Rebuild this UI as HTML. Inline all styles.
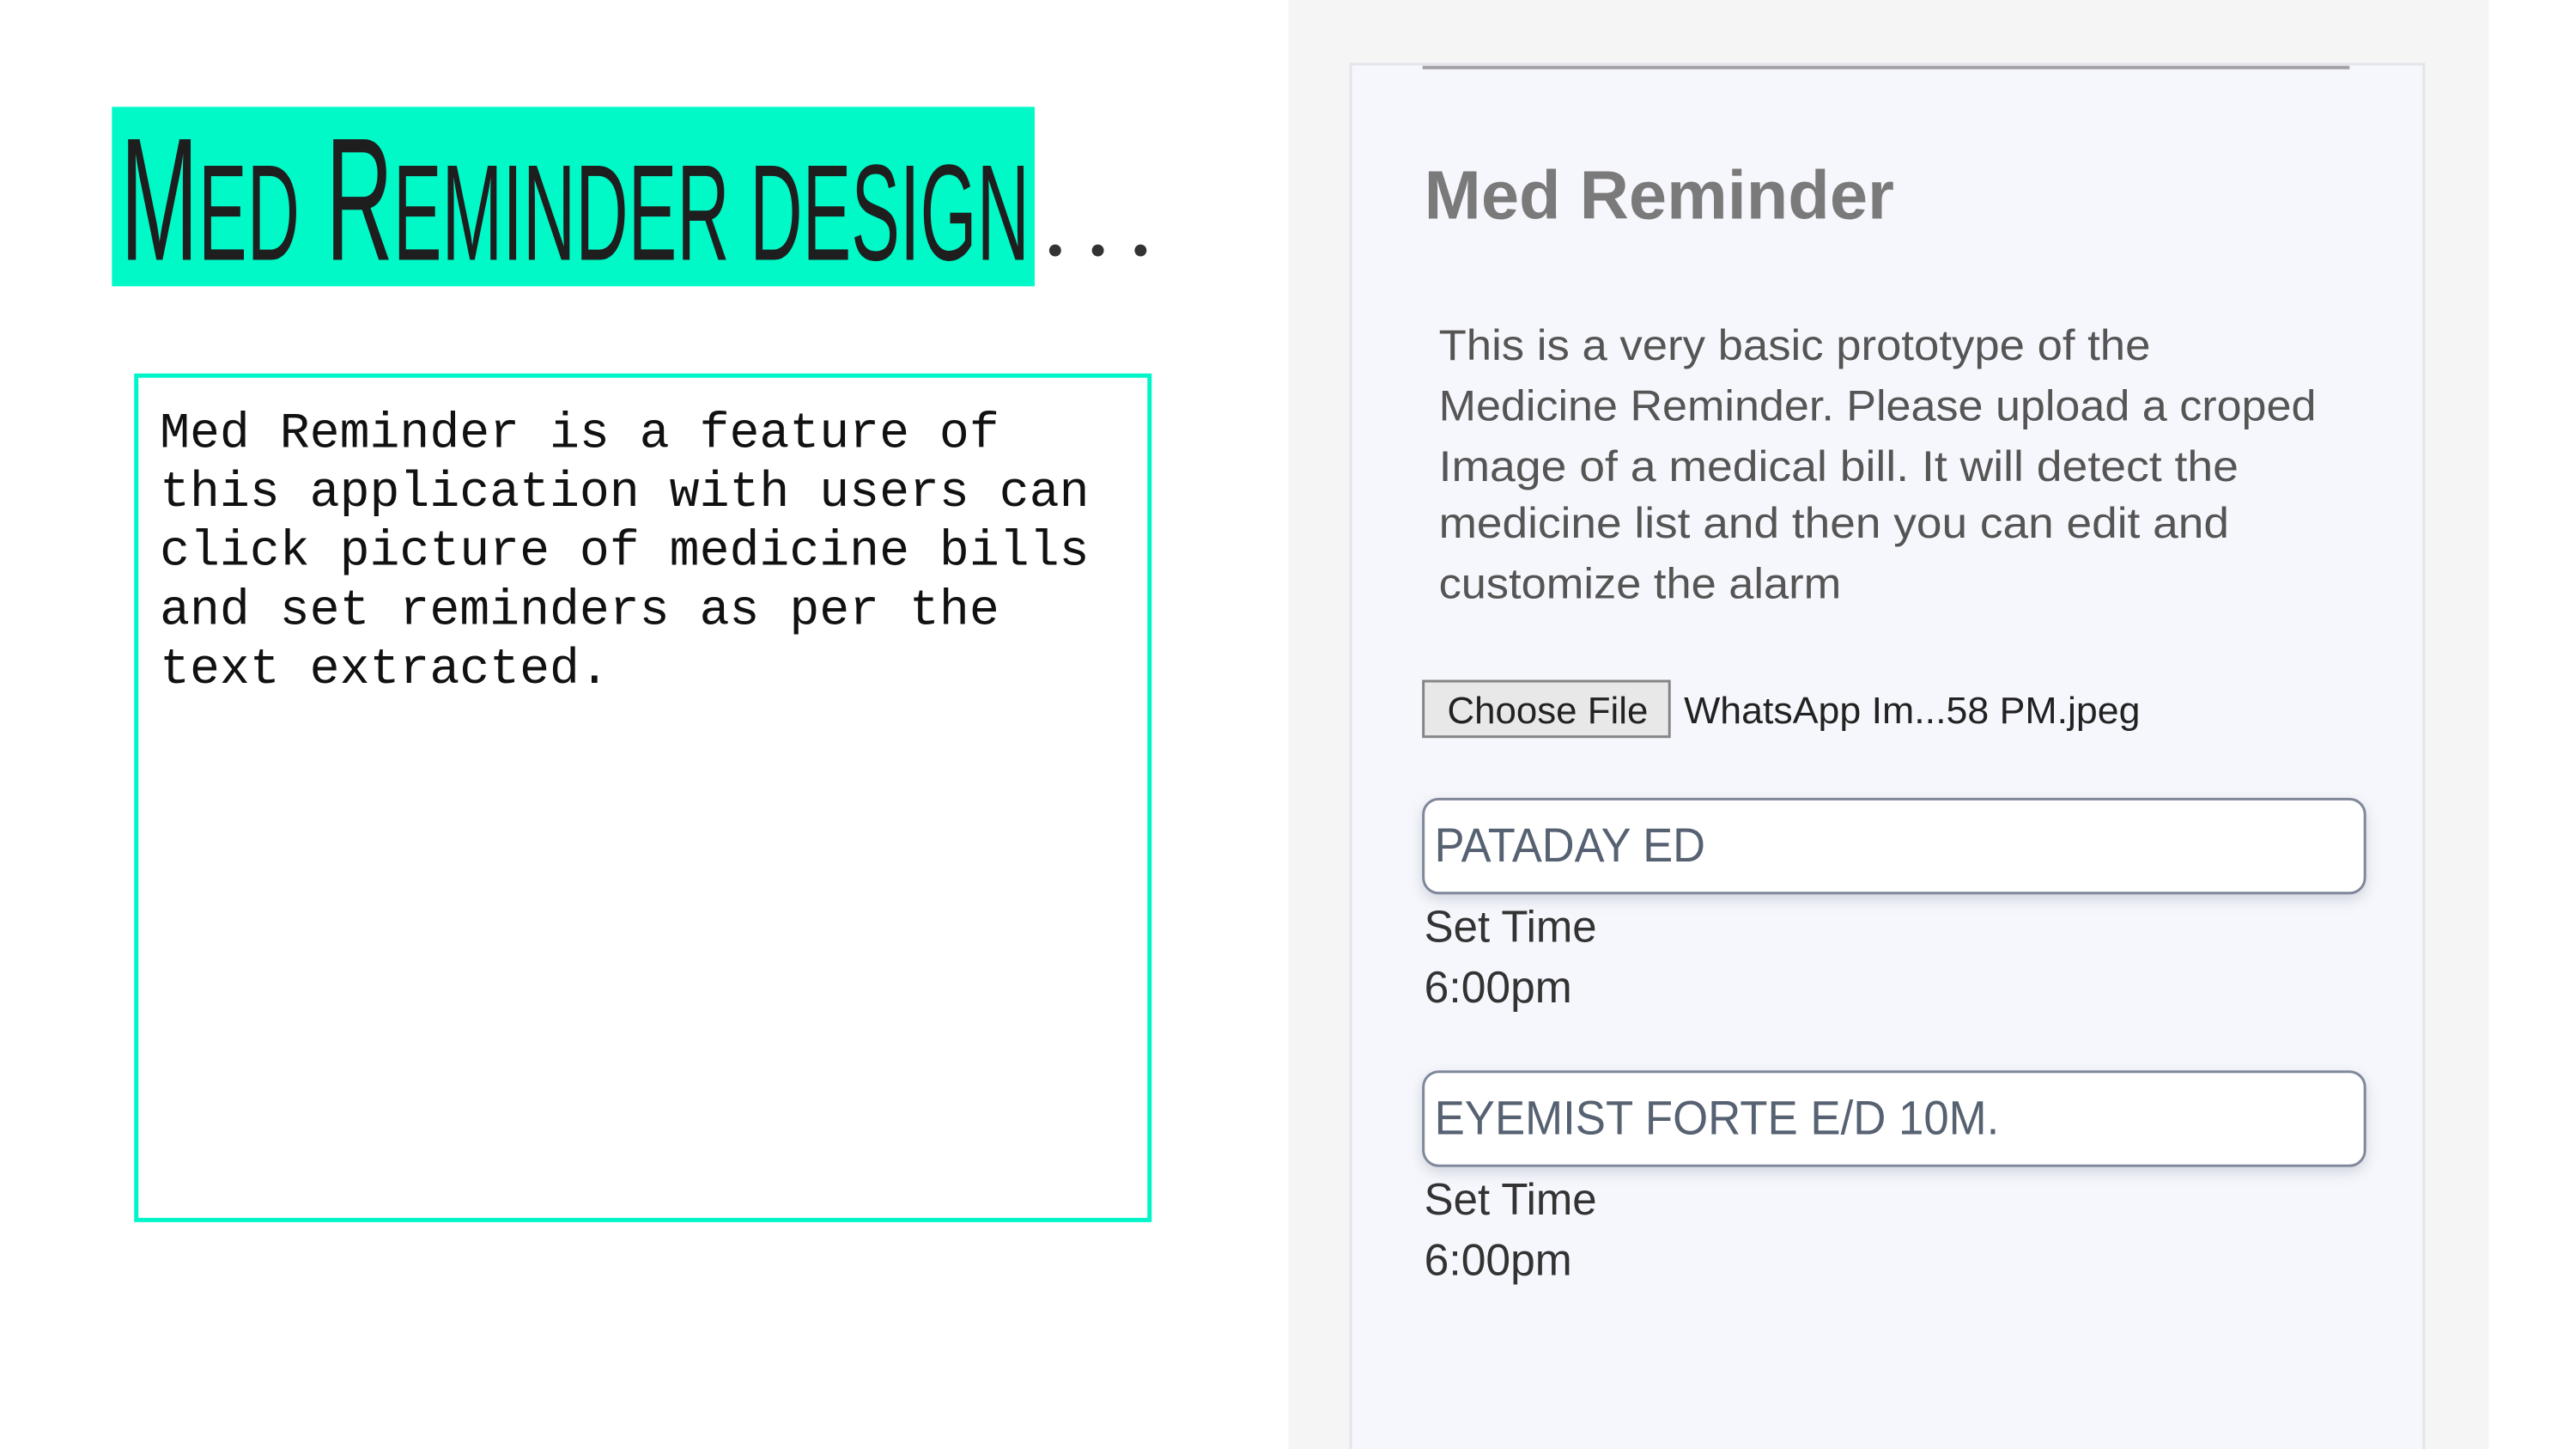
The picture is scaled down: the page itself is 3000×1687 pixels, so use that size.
<!DOCTYPE html>
<html><head><meta charset="utf-8"><style>html,body{margin:0;padding:0;background:#fff}svg{display:block}</style></head>
<body>
<svg width="3000" height="1687" viewBox="0 0 3000 1687" xmlns="http://www.w3.org/2000/svg">
<defs>
<filter id="sh" x="-5%" y="-30%" width="110%" height="160%"><feDropShadow dx="0" dy="6" stdDeviation="8" flood-color="#8890a8" flood-opacity="0.35"/></filter>
</defs>
<rect width="3000" height="1687" fill="#fff"/>
<g transform="scale(0.995)">
<!-- left -->
<rect x="131" y="125" width="1080" height="210" fill="#00f9c6"/>
<text x="141" y="304" font-family="Liberation Sans Narrow, Liberation Sans, sans-serif" font-size="205" fill="#1e1e1e" textLength="1064" lengthAdjust="spacingAndGlyphs">M<tspan font-size="160">ED</tspan> R<tspan font-size="160">EMINDER DESIGN</tspan></text>
<circle cx="1235" cy="293" r="7" fill="#333"/>
<circle cx="1285" cy="293" r="7" fill="#333"/>
<circle cx="1335" cy="293" r="7" fill="#333"/>
<rect x="159.5" y="439.5" width="1186" height="988" fill="none" stroke="#00f5c8" stroke-width="5"/>
<g font-family="Liberation Mono, monospace" font-size="58.5" fill="#111">
<text x="187" y="523">Med Reminder is a feature of</text>
<text x="187" y="592">this application with users can</text>
<text x="187" y="661">click picture of medicine bills</text>
<text x="187" y="730">and set reminders as per the</text>
<text x="187" y="799">text extracted.</text>
</g>
<!-- right -->
<rect x="1508" y="0" width="1405" height="1700" fill="#f5f5f5"/>
<rect x="1581" y="75" width="1256" height="1650" fill="#f6f7fc" stroke="#e4e5ea" stroke-width="3"/>
<line x1="1665" y1="79" x2="2750" y2="79" stroke="#a0a0a4" stroke-width="4"/>
<text x="1667" y="256" font-family="Liberation Sans, sans-serif" font-weight="bold" font-size="80" fill="#7a7a7a" textLength="550" lengthAdjust="spacingAndGlyphs">Med Reminder</text>
<g font-family="Liberation Sans, sans-serif" font-size="50" fill="#555">
<text x="1684" y="421" textLength="833" lengthAdjust="spacingAndGlyphs">This is a very basic prototype of the</text>
<text x="1684" y="492" textLength="1027" lengthAdjust="spacingAndGlyphs">Medicine Reminder. Please upload a croped</text>
<text x="1684" y="563" textLength="936" lengthAdjust="spacingAndGlyphs">Image of a medical bill. It will detect the</text>
<text x="1684" y="629" textLength="925" lengthAdjust="spacingAndGlyphs">medicine list and then you can edit and</text>
<text x="1684" y="700" textLength="471" lengthAdjust="spacingAndGlyphs">customize the alarm</text>
</g>
<rect x="1666" y="797" width="288" height="65" fill="#e8e8e8" stroke="#858585" stroke-width="3"/>
<g font-family="Liberation Sans, sans-serif" font-size="44" fill="#222">
<text x="1694" y="846" textLength="235" lengthAdjust="spacingAndGlyphs">Choose File</text>
<text x="1971" y="846" textLength="534" lengthAdjust="spacingAndGlyphs">WhatsApp Im...58 PM.jpeg</text>
</g>
<rect x="1666" y="935" width="1102" height="110" rx="18" fill="#fff" stroke="#7f8799" stroke-width="3" filter="url(#sh)"/>
<rect x="1666" y="1254" width="1102" height="110" rx="18" fill="#fff" stroke="#7f8799" stroke-width="3" filter="url(#sh)"/>
<g font-family="Liberation Sans, sans-serif" font-size="56" fill="#566172">
<text x="1679" y="1008" textLength="317" lengthAdjust="spacingAndGlyphs">PATADAY ED</text>
<text x="1679" y="1327" textLength="661" lengthAdjust="spacingAndGlyphs">EYEMIST FORTE E/D 10M.</text>
</g>
<g font-family="Liberation Sans, sans-serif" font-size="52" fill="#333">
<text x="1667" y="1102" textLength="202" lengthAdjust="spacingAndGlyphs">Set Time</text>
<text x="1667" y="1173" textLength="173" lengthAdjust="spacingAndGlyphs">6:00pm</text>
<text x="1667" y="1421" textLength="202" lengthAdjust="spacingAndGlyphs">Set Time</text>
<text x="1667" y="1492" textLength="173" lengthAdjust="spacingAndGlyphs">6:00pm</text>
</g>
</g>
</svg>
</body></html>
